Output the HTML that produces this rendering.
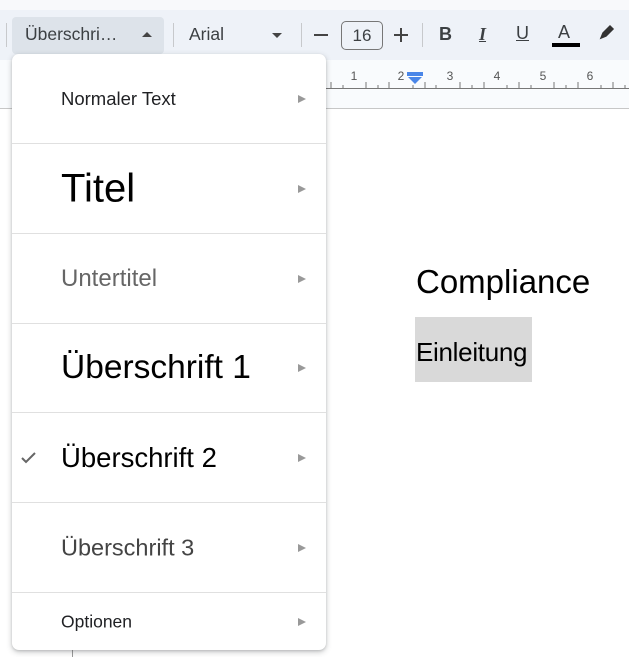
<!DOCTYPE html>
<html><head><meta charset="utf-8"><style>
*{margin:0;padding:0;box-sizing:border-box}
body{width:629px;height:657px;overflow:hidden;background:#fff;font-family:"Liberation Sans",Arial,sans-serif;position:relative}
.abs{position:absolute}
.top{left:0;top:0;width:629px;height:10px;background:#f8f9fb}
.tb{left:0;top:10px;width:629px;height:50px;background:#eef2f8}
.ruler{left:0;top:60px;width:629px;height:49px;background:#f9fbfd;border-bottom:1px solid #c7c7c7}
.sep{width:1px;height:24px;background:#c7c9cc;top:23px}
.t{color:#3c4043;font-size:17.5px}
.menu{left:12px;top:54px;width:314px;height:596px;background:#fff;border-radius:7px;box-shadow:0 2px 6px rgba(60,64,67,.3),0 1px 2px rgba(60,64,67,.15)}
.item{position:absolute;left:0;width:314px;height:90px;border-bottom:1px solid #e0e0e0}
.item span{position:absolute;left:49px;top:50%;transform:translateY(-50%);white-space:nowrap}
.item i{position:absolute;right:20px;top:50%;margin-top:-4px;width:0;height:0;border-left:8px solid #999;border-top:4px solid transparent;border-bottom:4px solid transparent}
</style></head><body>
<div class="abs top"></div>
<div class="abs tb"></div>
<div class="abs sep" style="left:6px"></div>
<div class="abs" style="left:12px;top:17px;width:152px;height:37px;background:#dde3ea;border-radius:4px"></div>
<div class="abs t" style="left:25px;top:24px">Überschri…</div>
<div class="abs" style="left:142px;top:32px;border-left:5px solid transparent;border-right:5px solid transparent;border-bottom:5px solid #444"></div>
<div class="abs sep" style="left:173px"></div>
<div class="abs t" style="left:189px;top:24px">Arial</div>
<div class="abs" style="left:272px;top:33px;border-left:5px solid transparent;border-right:5px solid transparent;border-top:5px solid #444"></div>
<div class="abs sep" style="left:301px"></div>
<div class="abs" style="left:314px;top:34px;width:14px;height:2px;background:#444"></div>
<div class="abs t" style="left:341px;top:21px;width:42px;height:29px;border:1px solid #777;border-radius:5px;text-align:center;line-height:27px;font-size:17px">16</div>
<div class="abs" style="left:394px;top:34px;width:14px;height:2px;background:#444"></div>
<div class="abs" style="left:400px;top:28px;width:2px;height:14px;background:#444"></div>
<div class="abs sep" style="left:422px"></div>
<div class="abs t" style="left:439px;top:24px;font-weight:bold;font-size:18px">B</div>
<div class="abs t" style="left:479px;top:24px;font-style:italic;font-weight:bold;text-decoration:underline;font-size:18px;font-family:'Liberation Serif',serif">I</div>
<div class="abs t" style="left:516px;top:23px;text-decoration:underline;font-size:18px">U</div>
<div class="abs t" style="left:558px;top:22px;font-size:18px">A</div>
<div class="abs" style="left:552px;top:43px;width:28px;height:4px;background:#000"></div>
<svg class="abs" style="left:598px;top:23px" width="18" height="18" viewBox="0 0 18 18"><path d="M3 15l2-5 7-7 3 3-7 7z" fill="#333" stroke="#333" stroke-width="1.5"/></svg>
<div class="abs ruler"></div>
<svg class="abs" style="left:326px;top:60px" width="303" height="50">
<g stroke="#777" stroke-width="1">
<line x1="0" y1="28.5" x2="303" y2="28.5"/>
</g>
<g font-size="12" fill="#555" font-family="Liberation Sans,sans-serif" text-anchor="middle">
<text x="28" y="20">1</text><text x="75" y="20">2</text><text x="124" y="20">3</text><text x="171" y="20">4</text><text x="217" y="20">5</text><text x="264" y="20">6</text>
</g>
<g stroke="#777">
<path d="M5 22v6M17 25v3M40 22v6M52 25v3M63 22v6M87 25v3M99 22v6M110 25v3M134 22v6M146 25v3M158 22v6M181 25v3M193 22v6M205 25v3M228 22v6M240 25v3M252 22v6M275 25v3M287 22v6M299 25v3"/>
</g>
<rect x="81" y="12" width="16" height="4" fill="#4a86e8"/>
<path d="M82 17h14l-7 7z" fill="#4a86e8"/>
</svg>
<div class="abs" style="left:72px;top:640px;width:1px;height:17px;background:#999"></div>
<div class="abs" style="left:416px;top:263px;font-size:33px;color:#000">Compliance</div>
<div class="abs" style="left:415px;top:317px;width:117px;height:65px;background:#d9d9d9"></div>
<div class="abs" style="left:416px;top:337px;font-size:26px;color:#000;letter-spacing:-0.3px">Einleitung</div>
<div class="abs menu">
<div class="item" style="top:0"><span style="font-size:18.5px;color:#202124">Normaler Text</span><i></i></div>
<div class="item" style="top:90px"><span style="font-size:40px;color:#000">Titel</span><i></i></div>
<div class="item" style="top:180px"><span style="font-size:24px;color:#666">Untertitel</span><i></i></div>
<div class="item" style="top:269px"><span style="font-size:33.5px;color:#000">Überschrift 1</span><i></i></div>
<div class="item" style="top:359px"><span style="font-size:27.5px;color:#000">Überschrift 2</span><i></i>
<svg style="position:absolute;left:8px;top:38px" width="18" height="14"><path d="M2 7l4 4 9-9" fill="none" stroke="#666" stroke-width="2"/></svg></div>
<div class="item" style="top:449px"><span style="font-size:23.5px;color:#444">Überschrift 3</span><i></i></div>
<div class="item" style="top:539px;height:57px;border:none"><span style="font-size:17.5px;color:#202124">Optionen</span><i></i></div>
</div>
</body></html>
